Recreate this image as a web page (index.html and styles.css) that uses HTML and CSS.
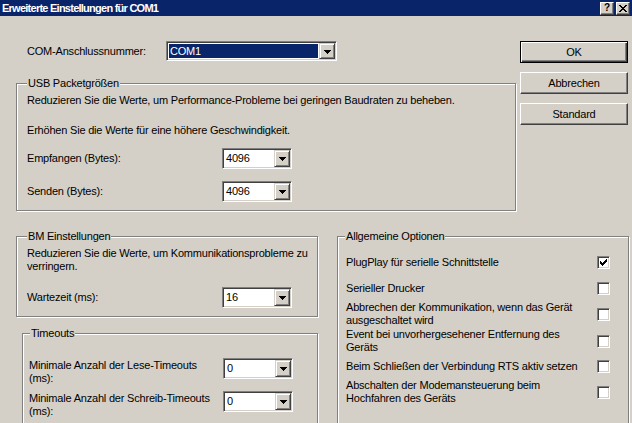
FILE: index.html
```html
<!DOCTYPE html>
<html lang="de">
<head>
<meta charset="utf-8">
<title>Erweiterte Einstellungen für COM1</title>
<link rel="stylesheet" href="styles.css">
</head>
<body>
<div class="titlebar">
  <span class="title">Erweiterte Einstellungen für COM1</span>
  <div class="caption-btns">
    <span class="cap-btn help">?</span>
    <span class="cap-btn close"><svg width="8" height="7" viewBox="0 0 8 7" shape-rendering="crispEdges"><path d="M0 0h2v1H0zM6 0h2v1H6zM1 1h2v1H1zM5 1h2v1H5zM2 2h4v1H2zM3 3h2v1H3zM2 4h4v1H2zM1 5h2v1H1zM5 5h2v1H5zM0 6h2v1H0zM6 6h2v1H6z" fill="#000"/></svg></span>
  </div>
</div>
<div class="client">
  <div class="top">
    <div class="main">
      <div class="com-row">
        <span class="com-label">COM-Anschlussnummer:</span>
        <div class="combo combo-com">
          <span class="value selected">COM1</span>
          <span class="drop"><svg width="7" height="4" viewBox="0 0 7 4" shape-rendering="crispEdges"><path d="M0 0h7v1H0zM1 1h5v1H1zM2 2h3v1H2zM3 3h1v1H3z" fill="#000"/></svg></span>
        </div>
      </div>
      <div class="group group-usb">
        <span class="legend">USB Packetgrößen</span>
        <p class="desc">Reduzieren Sie die Werte, um Performance-Probleme bei geringen Baudraten zu beheben.</p>
        <p class="desc desc-2">Erhöhen Sie die Werte für eine höhere Geschwindigkeit.</p>
        <div class="field-row usb-row-1">
          <span class="field-label">Empfangen (Bytes):</span>
          <div class="combo">
            <span class="value">4096</span>
            <span class="drop"><svg width="7" height="4" viewBox="0 0 7 4" shape-rendering="crispEdges"><path d="M0 0h7v1H0zM1 1h5v1H1zM2 2h3v1H2zM3 3h1v1H3z" fill="#000"/></svg></span>
          </div>
        </div>
        <div class="field-row usb-row-2">
          <span class="field-label">Senden (Bytes):</span>
          <div class="combo">
            <span class="value">4096</span>
            <span class="drop"><svg width="7" height="4" viewBox="0 0 7 4" shape-rendering="crispEdges"><path d="M0 0h7v1H0zM1 1h5v1H1zM2 2h3v1H2zM3 3h1v1H3z" fill="#000"/></svg></span>
          </div>
        </div>
      </div>
    </div>
    <div class="buttons">
      <button class="btn btn-default">OK</button>
      <button class="btn">Abbrechen</button>
      <button class="btn">Standard</button>
    </div>
  </div>
  <div class="bottom">
    <div class="leftcol">
      <div class="group group-bm">
        <span class="legend">BM Einstellungen</span>
        <p class="desc">Reduzieren Sie die Werte, um Kommunikationsprobleme zu<br>verringern.</p>
        <div class="field-row bm-row">
          <span class="field-label">Wartezeit (ms):</span>
          <div class="combo">
            <span class="value">16</span>
            <span class="drop"><svg width="7" height="4" viewBox="0 0 7 4" shape-rendering="crispEdges"><path d="M0 0h7v1H0zM1 1h5v1H1zM2 2h3v1H2zM3 3h1v1H3z" fill="#000"/></svg></span>
          </div>
        </div>
      </div>
      <div class="group group-timeouts">
        <span class="legend">Timeouts</span>
        <div class="timeout-row">
          <span class="field-label">Minimale Anzahl der Lese-Timeouts<br>(ms):</span>
          <div class="combo">
            <span class="value">0</span>
            <span class="drop"><svg width="7" height="4" viewBox="0 0 7 4" shape-rendering="crispEdges"><path d="M0 0h7v1H0zM1 1h5v1H1zM2 2h3v1H2zM3 3h1v1H3z" fill="#000"/></svg></span>
          </div>
        </div>
        <div class="timeout-row timeout-row-2">
          <span class="field-label">Minimale Anzahl der Schreib-Timeouts<br>(ms):</span>
          <div class="combo">
            <span class="value">0</span>
            <span class="drop"><svg width="7" height="4" viewBox="0 0 7 4" shape-rendering="crispEdges"><path d="M0 0h7v1H0zM1 1h5v1H1zM2 2h3v1H2zM3 3h1v1H3z" fill="#000"/></svg></span>
          </div>
        </div>
      </div>
    </div>
    <div class="group group-options">
      <span class="legend">Allgemeine Optionen</span>
      <div class="opt">
        <span class="opt-text">PlugPlay für serielle Schnittstelle</span>
        <span class="check"><svg width="7" height="7" viewBox="0 0 7 7" shape-rendering="crispEdges"><path d="M6 0h1v1H6zM5 1h2v1H5zM0 2h1v1H0zM4 2h3v1H4zM0 3h2v1H0zM3 3h3v1H3zM0 4h5v1H0zM1 5h3v1H1zM2 6h1v1H2z" fill="#000"/></svg></span>
      </div>
      <div class="opt">
        <span class="opt-text">Serieller Drucker</span>
        <span class="check"></span>
      </div>
      <div class="opt">
        <span class="opt-text">Abbrechen der Kommunikation, wenn das Gerät<br>ausgeschaltet wird</span>
        <span class="check"></span>
      </div>
      <div class="opt">
        <span class="opt-text">Event bei unvorhergesehener Entfernung des<br>Geräts</span>
        <span class="check"></span>
      </div>
      <div class="opt">
        <span class="opt-text">Beim Schließen der Verbindung RTS aktiv setzen</span>
        <span class="check"></span>
      </div>
      <div class="opt">
        <span class="opt-text">Abschalten der Modemansteuerung beim<br>Hochfahren des Geräts</span>
        <span class="check"></span>
      </div>
    </div>
  </div>
</div>
</body>
</html>
```
FILE: styles.css
```css
* { box-sizing: border-box; }
html, body { margin: 0; padding: 0; }
body {
  width: 632px;
  height: 423px;
  overflow: hidden;
  background: #d4d0c8;
  font-family: "Liberation Sans", Arial, sans-serif;
  font-size: 11px;
  line-height: 13px;
  color: #000;
  letter-spacing: -0.2px;
}
p { margin: 0; }
.desc { white-space: nowrap; }

/* title bar */
.titlebar {
  height: 16px;
  background: #0a246a;
  display: flex;
  align-items: center;
  justify-content: space-between;
  padding: 0 2px 0 2px;
}
.title {
  color: #fff;
  font-weight: bold;
  letter-spacing: -0.75px;
}
.caption-btns { display: flex; gap: 2px; }
.cap-btn {
  width: 14px;
  height: 13px;
  background: #d4d0c8;
  border: 1px solid;
  border-color: #fff #404040 #404040 #fff;
  box-shadow: inset -1px -1px #808080;
  display: flex;
  align-items: center;
  justify-content: center;
  font-weight: bold;
  font-size: 10px;
  line-height: 10px;
  letter-spacing: 0;
}

/* layout */
.top { display: flex; padding-left: 16px; gap: 4px; }
.main { width: 500px; }
.com-row { display: flex; align-items: center; margin-top: 25px; padding-left: 11px; }
.com-label { width: 139px; }
.bottom { display: flex; align-items: flex-start; padding-left: 16px; margin-top: 25px; }
.leftcol { width: 302px; flex: none; }

/* group boxes */
.group {
  position: relative;
  border: 1px solid #808080;
  box-shadow: inset 1px 1px #fff, 1px 1px #fff;
}
.legend {
  position: absolute;
  top: -7px;
  left: 10px;
  padding: 0 1px;
  background: #d4d0c8;
  white-space: nowrap;
}
.group-usb { margin-top: 22px; padding: 10px 10px 8px 10px; }
.desc-2 { margin-top: 17px; }
.usb-row-1 { margin-top: 11px; }
.usb-row-2 { margin-top: 12px; }

.group-bm { padding: 10px 10px 8px 10px; }
.bm-row { margin-top: 14px; }

.group-timeouts { margin: 16px 0 0 6px; padding: 24px 6px 10px 6px; }
.group-timeouts .legend { left: 7px; }
.timeout-row { display: grid; grid-template-columns: 194px 70px; align-items: start; }
.timeout-row .field-label { margin-top: 1px; white-space: nowrap; }
.timeout-row-2 { margin-top: 6px; }

.field-row { display: grid; grid-template-columns: 195px 70px; align-items: center; }

.group-options {
  margin-left: 19px;
  width: 292px;
  flex: none;
  padding: 19px 18px 40px 8px;
  display: grid;
  grid-template-rows: 26px 19px 27px 32px 19px auto;
}
.group-options .legend { left: 7px; }
.opt { display: flex; align-items: center; justify-content: space-between; align-self: start; }
.opt-text { white-space: nowrap; }

/* combo box */
.combo {
  display: flex;
  width: 70px;
  height: 21px;
  background: #fff;
  border: 1px solid;
  border-color: #808080 #fff #fff #808080;
  box-shadow: inset 1px 1px #404040, inset -1px -1px #d4d0c8;
  padding: 1px;
}
.combo-com { width: 171px; height: 20px; }
.combo .value {
  flex: 1;
  display: flex;
  align-items: center;
  padding-left: 2px;
}
.combo .value.selected {
  margin: 1px;
  padding-left: 1px;
  background: #0a246a;
  color: #fff;
}
.drop {
  width: 16px;
  flex: none;
  background: #d4d0c8;
  border: 1px solid;
  border-color: #d4d0c8 #404040 #404040 #d4d0c8;
  box-shadow: inset 1px 1px #fff, inset -1px -1px #808080;
  display: flex;
  align-items: center;
  justify-content: center;
}
.drop svg { display: block; margin-top: 1px; }

/* checkbox */
.check {
  width: 13px;
  height: 13px;
  flex: none;
  background: #fff;
  border: 1px solid;
  border-color: #808080 #fff #fff #808080;
  box-shadow: inset 1px 1px #404040, inset -1px -1px #d4d0c8;
  display: flex;
  align-items: center;
  justify-content: center;
}
.check svg { display: block; }

/* push buttons */
.buttons {
  width: 108px;
  flex: none;
  display: flex;
  flex-direction: column;
  gap: 9px;
  margin-top: 25px;
}
.btn {
  height: 22px;
  padding: 0;
  font: inherit;
  letter-spacing: inherit;
  color: #000;
  background: #d4d0c8;
  border: 1px solid;
  border-color: #fff #404040 #404040 #fff;
  box-shadow: inset -1px -1px #808080;
}
.btn-default {
  border-color: #000;
  box-shadow: inset 1px 1px #fff, inset -1px -1px #404040, inset -2px -2px #808080;
}
```
